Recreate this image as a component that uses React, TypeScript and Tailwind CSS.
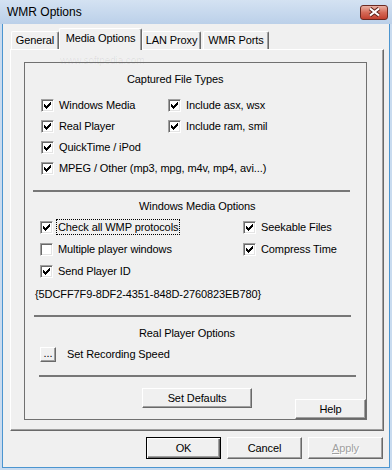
import React from "react";

const CHECK_PATH =
  "M6 0h1v1h-1z M5 1h2v1h-2z M0 2h1v1h-1z M4 2h3v1h-3z M0 3h2v1h-2z M3 3h3v1h-3z M0 4h5v1h-5z M1 5h3v1h-3z M2 6h1v1h-1z";

function Check({ checked }: { checked: boolean }) {
  return (
    <span className="flex h-[13px] w-[13px] shrink-0 items-center justify-center border border-t-[#a0a0a0] border-l-[#a0a0a0] border-r-white border-b-white bg-white shadow-[inset_1px_1px_0_#696969,inset_-1px_-1px_0_#e3e3e3]">
      {checked && (
        <svg width="7" height="7" viewBox="0 0 7 7" shapeRendering="crispEdges">
          <path d={CHECK_PATH} fill="#000" />
        </svg>
      )}
    </span>
  );
}

function Box({ checked, label, focus }: { checked: boolean; label: string; focus?: boolean }) {
  return (
    <div className="flex items-center gap-[5px]">
      <Check checked={checked} />
      <span className={focus ? "-ml-[2px] border border-dotted border-black px-[1px] leading-[14px]" : "leading-[13px]"}>
        {label}
      </span>
    </div>
  );
}

const btn =
  "flex items-center justify-center bg-[#f0f0f0] border border-t-white border-l-white border-r-[#696969] border-b-[#696969] shadow-[inset_-1px_-1px_0_#a0a0a0]";

const Separator = ({ className }: { className: string }) => (
  <div className={`h-[2px] w-[317px] bg-[#777777] ${className}`} />
);

export default function App() {
  return (
    <div className="relative flex h-[470px] w-[392px] flex-col overflow-hidden bg-[#c9dbef] font-['Liberation_Sans',Arial,sans-serif] text-[11px] tracking-[-0.1px] text-black">
      {/* title bar */}
      <div className="flex h-[24px] shrink-0 items-center bg-gradient-to-b from-[#d4e2f2] to-[#bbd0e9] pl-[7px] pr-[4px]">
        <span className="text-[12px] tracking-normal">WMR Options</span>
        <div className="ml-auto flex h-[15px] w-[28px] items-center justify-center rounded-[3px] border border-[#6b2a22] bg-gradient-to-b from-[#e9b1a4] via-[#d56a58] to-[#c2402f]">
          <svg width="13" height="10" viewBox="0 0 13 10">
            <path d="M2 1.5L11 8.5M11 1.5L2 8.5" stroke="#5a2018" strokeWidth="4" />
            <path d="M2 1.5L11 8.5M11 1.5L2 8.5" stroke="#fff" strokeWidth="2.2" />
          </svg>
        </div>
      </div>

      {/* client area */}
      <div className="mx-[2px] mb-[2px] flex flex-1 flex-col border border-t-0 border-[#4b95d0] bg-[#f0f0f0]">
        {/* tabs */}
        <div className="relative z-10 mt-[4px] flex h-[21px] items-end pl-[8px]">
          <div className="flex h-[18px] w-[48px] items-center justify-center rounded-t-[2px] border border-b-0 border-t-white border-l-white border-r-[#696969] shadow-[inset_-1px_0_0_#a0a0a0]">
            General
          </div>
          <div className="-mb-px flex h-[22px] w-[83px] items-center justify-center rounded-t-[2px] border border-b-0 border-t-white border-l-white border-r-[#696969] bg-[#f0f0f0] pb-[2px] shadow-[inset_-1px_0_0_#a0a0a0]">
            Media Options
          </div>
          <div className="flex h-[18px] w-[59px] items-center justify-center rounded-t-[2px] border border-b-0 border-t-white border-l-white border-r-[#696969] shadow-[inset_-1px_0_0_#a0a0a0]">
            LAN Proxy
          </div>
          <div className="ml-[2px] flex h-[18px] w-[66px] items-center justify-center rounded-t-[2px] border border-b-0 border-t-white border-l-white border-r-[#696969] shadow-[inset_-1px_0_0_#a0a0a0]">
            WMR Ports
          </div>
        </div>

        {/* tab panel */}
        <div className="relative ml-[7px] h-[382px] w-[374px] border border-t-white border-l-white border-r-[#696969] border-b-[#696969] shadow-[inset_-1px_-1px_0_#a0a0a0]">
          <div className="pointer-events-none absolute left-[49px] top-[3px] text-[10px] text-black/[0.08]">www.softpedia.com</div>
          <div className="relative ml-[13px] mt-[12px] flex h-[358px] w-[343px] flex-col border border-[#707070]">
            <div className="ml-[102px] mt-[10px] h-[13px] leading-[13px]">Captured File Types</div>
            <div className="mt-[9px] flex flex-col">
              <div className="flex h-[21px] items-center">
                <div className="ml-[16px] w-[127px]"><Box checked label="Windows Media" /></div>
                <Box checked label="Include asx, wsx" />
              </div>
              <div className="flex h-[21px] items-center">
                <div className="ml-[16px] w-[127px]"><Box checked label="Real Player" /></div>
                <Box checked label="Include ram, smil" />
              </div>
              <div className="flex h-[21px] items-center pl-[16px]">
                <Box checked label="QuickTime / iPod" />
              </div>
              <div className="flex h-[21px] items-center pl-[16px]">
                <Box checked label="MPEG / Other (mp3, mpg, m4v, mp4, avi...)" />
              </div>
            </div>

            <Separator className="ml-[8px] mt-[11px]" />

            <div className="ml-[114px] mt-[8px] h-[13px] leading-[13px]">Windows Media Options</div>
            <div className="mt-[3px] flex flex-col">
              <div className="flex h-[22px] items-center">
                <div className="ml-[15px] w-[203px]"><Box checked label="Check all WMP protocols" focus /></div>
                <Box checked label="Seekable Files" />
              </div>
              <div className="flex h-[22px] items-center">
                <div className="ml-[15px] w-[203px]"><Box checked={false} label="Multiple player windows" /></div>
                <Box checked label="Compress Time" />
              </div>
              <div className="flex h-[22px] items-center pl-[15px]">
                <Box checked label="Send Player ID" />
              </div>
            </div>
            <div className="ml-[10px] mt-[6px] h-[13px] leading-[13px]">{"{5DCFF7F9-8DF2-4351-848D-2760823EB780}"}</div>

            <Separator className="ml-[9px] mt-[14px]" />

            <div className="ml-[114px] mt-[10px] h-[13px] leading-[13px]">Real Player Options</div>
            <div className="mt-[7px] flex h-[15px] items-center">
              <div className={`${btn} ml-[15px] h-[15px] w-[16px] pb-[3px] leading-none`}>...</div>
              <span className="ml-[11px]">Set Recording Speed</span>
            </div>

            <Separator className="ml-[14px] mt-[13px]" />

            <div className={`${btn} ml-[117px] mt-[11px] h-[20px] w-[110px]`}>Set Defaults</div>

            <div className={`${btn} absolute left-[270px] top-[336px] h-[20px] w-[71px]`}>Help</div>
          </div>
        </div>

        {/* dialog buttons */}
        <div className="mt-[6px] flex justify-end gap-[6px] pr-[6px]">
          <div className="flex h-[22px] w-[75px] items-center justify-center border border-black bg-[#f0f0f0] shadow-[inset_1px_1px_0_#fff,inset_-1px_-1px_0_#696969,inset_-2px_-2px_0_#a0a0a0]">
            OK
          </div>
          <div className={`${btn} h-[22px] w-[75px]`}>Cancel</div>
          <div className={`${btn} h-[22px] w-[75px] text-[#a0a0a0] [text-shadow:1px_1px_0_#fff]`}>
            <span className="underline">A</span>pply
          </div>
        </div>
      </div>
    </div>
  );
}
